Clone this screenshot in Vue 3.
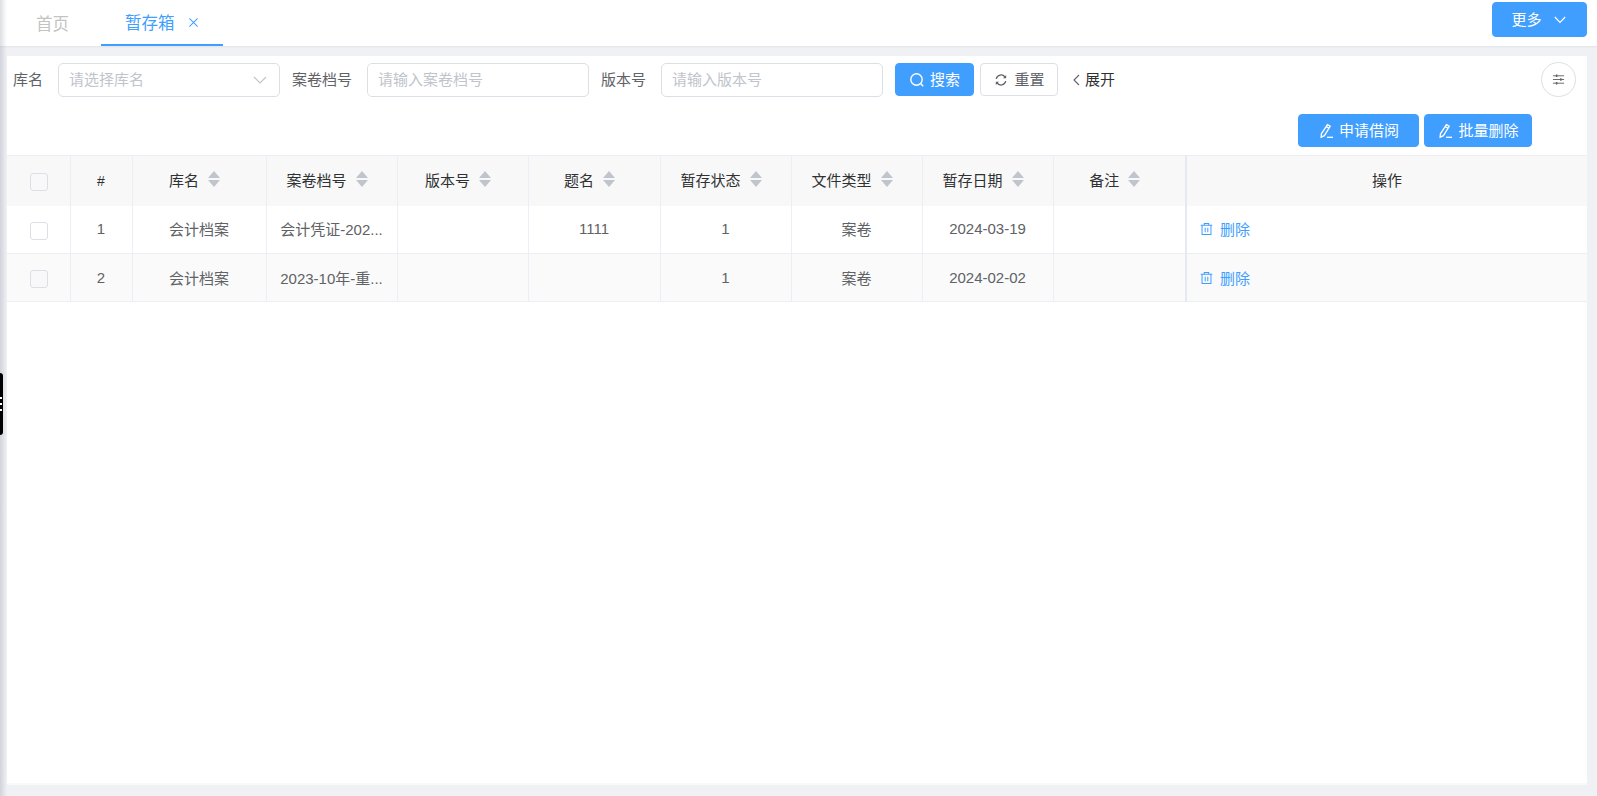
<template>
  <div class="page">
    <div class="side-shadow"></div>
    <div class="drag-handle"><i></i><i></i><i></i></div>

    <header class="tab-bar">
      <div class="tab">首页</div>
      <div class="tab active">
        暂存箱
        <svg class="tab-close" viewBox="0 0 12 12"><path d="M1.5 1.5l9 9M10.5 1.5l-9 9" /></svg>
      </div>
      <button class="btn primary more-btn">
        更多
        <svg class="more-arrow" viewBox="0 0 12 8"><path d="M.8 1l5.2 5.4L11.2 1" /></svg>
      </button>
    </header>

    <main class="content">
      <div class="search-row">
        <label class="field-label first">库名</label>
        <div class="input select">
          <span>请选择库名</span>
          <svg class="select-arrow" viewBox="0 0 14 8"><path d="M1 1l6 6 6-6" /></svg>
        </div>
        <label class="field-label">案卷档号</label>
        <div class="input"><span>请输入案卷档号</span></div>
        <label class="field-label">版本号</label>
        <div class="input"><span>请输入版本号</span></div>
        <button class="btn primary search-btn">
          <svg class="icon" viewBox="0 0 16 16"><circle cx="7.5" cy="7.5" r="5.7" /><path d="M11.6 11.6l2.6 2.6" /></svg>
          <span class="btn-text">搜索</span>
        </button>
        <button class="btn reset-btn">
          <svg class="icon small" viewBox="0 0 16 16"><path d="M2.6 6.6A5.6 5.6 0 0 1 12.6 4.6" /><path d="M13.4 9.4A5.6 5.6 0 0 1 3.4 11.4" /><path class="fill" d="M13.9 2.4v3.6h-3.6zM2.1 13.6V10h3.6z" /></svg>
          <span class="btn-text">重置</span>
        </button>
        <a class="expand">
          <svg viewBox="0 0 7 12"><path d="M6 1L1 6l5 5" /></svg>
          <span class="btn-text">展开</span>
        </a>
        <button class="circle-btn">
          <svg viewBox="0 0 14 14">
            <path d="M1 3h12M1 7h12M1 11h12" />
            <path class="knob" d="M5 1.6v2.8M9.5 5.6v2.8M5 9.6v2.8" />
          </svg>
        </button>
      </div>

      <div class="action-row">
        <button v-for="label in actions" :key="label" class="btn primary action-btn">
          <svg class="icon pencil" viewBox="0 0 16 16">
            <path d="M9.4 1.6l2.8 1.7-5.8 9.4-3.3 1.5.3-3.4z" />
            <path d="M8.2 3.6L11 5.3" />
            <path d="M9 14.3h6" />
          </svg>
          <span class="btn-text">{{ label }}</span>
        </button>
      </div>

      <table class="grid">
        <colgroup>
          <col style="width: 63px" />
          <col style="width: 62px" />
          <col style="width: 134px" />
          <col style="width: 131px" />
          <col style="width: 131px" />
          <col style="width: 132px" />
          <col v-for="n in 3" :key="n" style="width: 131px" />
          <col style="width: 133px" />
          <col />
        </colgroup>
        <thead>
          <tr>
            <th class="check-cell"><span class="check"></span></th>
            <th class="index-head">#</th>
            <th v-for="col in columns" :key="col">
              <span class="head-cell">
                {{ col }}
                <span class="sort"><i class="up"></i><i class="down"></i></span>
              </span>
            </th>
            <th class="op-col">操作</th>
          </tr>
        </thead>
        <tbody>
          <tr v-for="(row, i) in rows" :key="i" :class="{ striped: i % 2 === 1 }">
            <td class="check-cell"><span class="check"></span></td>
            <td>{{ i + 1 }}</td>
            <td>{{ row.lib }}</td>
            <td>{{ row.no }}</td>
            <td>{{ row.version }}</td>
            <td>{{ row.title }}</td>
            <td>{{ row.status }}</td>
            <td>{{ row.type }}</td>
            <td>{{ row.date }}</td>
            <td>{{ row.remark }}</td>
            <td class="op-col op-cell">
              <a class="del-link">
                <svg viewBox="0 0 14 14">
                  <path d="M.8 3h12.4M4.6 3V1h4.8v2M2.2 3v10h9.6V3M5.6 5.6v5M8.4 5.6v5" />
                </svg>
                删除
              </a>
            </td>
          </tr>
        </tbody>
      </table>
    </main>
  </div>
</template>

<script setup>
const actions = ['申请借阅', '批量删除']

const columns = ['库名', '案卷档号', '版本号', '题名', '暂存状态', '文件类型', '暂存日期', '备注']

const rows = [
  { lib: '会计档案', no: '会计凭证-202...', version: '', title: '1111', status: '1', type: '案卷', date: '2024-03-19', remark: '' },
  { lib: '会计档案', no: '2023-10年-重...', version: '', title: '', status: '1', type: '案卷', date: '2024-02-02', remark: '' }
]
</script>

<style>
html,
body {
  margin: 0;
  overflow: hidden;
}
</style>

<style scoped>
.page {
  position: relative;
  height: 796px;
  display: flex;
  flex-direction: column;
  background: #f0f1f5;
  font-family: "Liberation Sans", "Noto Sans CJK SC", sans-serif;
  font-size: 15px;
  color: #606266;
}

.side-shadow {
  position: absolute;
  left: 0;
  top: 0;
  bottom: 0;
  width: 7px;
  background: linear-gradient(to right, rgba(40, 60, 80, 0.16), rgba(40, 60, 80, 0));
  z-index: 2;
}

.drag-handle {
  position: absolute;
  left: 0;
  top: 373px;
  width: 3px;
  height: 62px;
  background: #000;
  border-radius: 0 3px 3px 0;
  display: flex;
  flex-direction: column;
  justify-content: center;
  align-items: flex-start;
  gap: 4px;
  z-index: 3;
}

.drag-handle i {
  width: 2px;
  height: 2px;
  background: #fff;
}

.tab-bar {
  height: 46px;
  flex-shrink: 0;
  display: flex;
  align-items: flex-start;
  background: #fff;
  box-shadow: 0 1px 2px rgba(0, 0, 0, 0.06);
  padding: 0 10px 0 12px;
  position: relative;
  z-index: 1;
}

.tab {
  height: 46px;
  box-sizing: border-box;
  padding: 0 24px 0 24px;
  display: flex;
  align-items: center;
  font-size: 16.5px;
  color: #c4c4c4;
}

.tab.active {
  margin-left: 8px;
  padding: 0 24px;
  width: 122px;
  color: #409eff;
  border-bottom: 2px solid #409eff;
}

.tab-close {
  width: 11px;
  height: 11px;
  margin-left: 13px;
  fill: none;
  stroke: #409eff;
  stroke-width: 1.1;
}

.btn {
  box-sizing: border-box;
  height: 33px;
  display: inline-flex;
  align-items: center;
  justify-content: center;
  border: 1px solid #dcdfe6;
  border-radius: 4px;
  background: #fff;
  color: #606266;
  font: inherit;
  padding: 0;
}

.btn.primary {
  background: #409eff;
  border-color: #409eff;
  color: #fff;
}

.btn-text {
  padding-bottom: 2px;
}

.more-btn {
  margin: 2px 0 0 auto;
  width: 95px;
  height: 35px;
  padding: 0 2px 3px 0;
}

.more-arrow {
  width: 12px;
  height: 8px;
  margin: 3px 0 0 12px;
  fill: none;
  stroke: #fff;
  stroke-width: 1.1;
}

.content {
  flex: 1;
  margin: 10px 10px 11px 7px;
  background: #fff;
  border-bottom: 2px solid #f8f9fa;
  display: flex;
  flex-direction: column;
  min-height: 0;
}

.search-row {
  display: flex;
  align-items: center;
  height: 35px;
  margin-top: 6px;
}

.field-label {
  margin: 0 15px 0 12px;
  padding-bottom: 2px;
  white-space: nowrap;
}

.field-label.first {
  margin-left: 6px;
}

.input {
  box-sizing: border-box;
  width: 222px;
  height: 34px;
  border: 1px solid #dcdfe6;
  border-radius: 5px;
  padding: 0 11px 2px 10px;
  display: flex;
  align-items: center;
  justify-content: space-between;
  color: #c0c4cc;
  background: #fff;
}

.select-arrow {
  width: 14px;
  height: 8px;
  margin: 3px 1px 0 0;
  fill: none;
  stroke: #c0c4cc;
  stroke-width: 1.2;
}

.icon {
  width: 16px;
  height: 16px;
  margin-right: 5px;
  fill: none;
  stroke: currentColor;
  stroke-width: 1.4;
}

.icon.small {
  width: 14px;
  height: 14px;
  margin-right: 7px;
  stroke-width: 1.5;
}

.icon .fill {
  fill: currentColor;
  stroke: none;
}

.search-btn {
  width: 79px;
  margin-left: 12px;
}

.reset-btn {
  width: 78px;
  margin-left: 6px;
}

.expand {
  display: inline-flex;
  align-items: center;
  margin-left: 15px;
  color: #303133;
}

.expand svg {
  width: 7px;
  height: 12px;
  margin-right: 5px;
  fill: none;
  stroke: #606266;
  stroke-width: 1.1;
}

.circle-btn {
  box-sizing: border-box;
  width: 35px;
  height: 35px;
  margin-left: auto;
  margin-right: 11px;
  border: 1px solid #dcdfe6;
  border-radius: 50%;
  background: #fff;
  padding: 0;
  display: flex;
  align-items: center;
  justify-content: center;
}

.circle-btn svg {
  width: 13px;
  height: 13px;
  fill: none;
  stroke: #606266;
  stroke-width: 1;
}

.circle-btn .knob {
  stroke-width: 1.6;
}

.action-row {
  display: flex;
  justify-content: flex-end;
  gap: 5px;
  padding-right: 55px;
  margin-top: 17px;
}

.action-btn:first-child {
  width: 121px;
}

.action-btn:last-child {
  width: 108px;
}

.pencil {
  margin-right: 5px;
  stroke-width: 1.3;
}

.grid {
  width: 1580px;
  margin-top: 8px;
  table-layout: fixed;
  border-collapse: collapse;
  border-top: 1px solid #ebeef5;
}

.grid th {
  height: 50px;
  padding: 0 0 3px;
  box-sizing: border-box;
  background: #f8f8f9;
  color: #303133;
  font-weight: 400;
  border-right: 1px solid #ebeef5;
  text-align: center;
}

.grid th:last-child,
.grid td:last-child {
  border-right: none;
}

.grid td {
  height: 48px;
  padding: 0 0 1px;
  box-sizing: border-box;
  text-align: center;
  border-right: 1px solid #ebeef5;
  border-bottom: 1px solid #ebeef5;
}

.grid tr.striped td {
  background: #fafafa;
}

.grid .index-head {
  font-size: 14px;
  padding: 0;
}

.grid .op-col {
  border-left: 2px solid #e6e9f2;
}

.grid td.op-cell {
  text-align: left;
  padding-left: 13px;
}

.grid .check-cell {
  padding: 2px 0 0 2px;
}

.check {
  display: inline-block;
  box-sizing: border-box;
  width: 18px;
  height: 18px;
  border: 1px solid #dcdfe6;
  border-radius: 3px;
  background: #fff;
  vertical-align: middle;
}

.striped .check,
th .check {
  background: #f8f8f9;
}

.head-cell {
  display: inline-flex;
  align-items: center;
  padding-right: 9px;
}

.sort {
  display: inline-flex;
  flex-direction: column;
  gap: 2px;
  margin-left: 9px;
}

.sort i {
  width: 0;
  height: 0;
  border-left: 6.5px solid transparent;
  border-right: 6.5px solid transparent;
}

.sort .up {
  border-bottom: 7px solid #c0c4cc;
}

.sort .down {
  border-top: 7px solid #c0c4cc;
}

.del-link {
  display: inline-flex;
  align-items: center;
  color: #409eff;
}

.del-link svg {
  width: 13px;
  height: 14px;
  margin: 1px 7px 0 0;
  fill: none;
  stroke: #409eff;
  stroke-width: 1.1;
}
</style>
